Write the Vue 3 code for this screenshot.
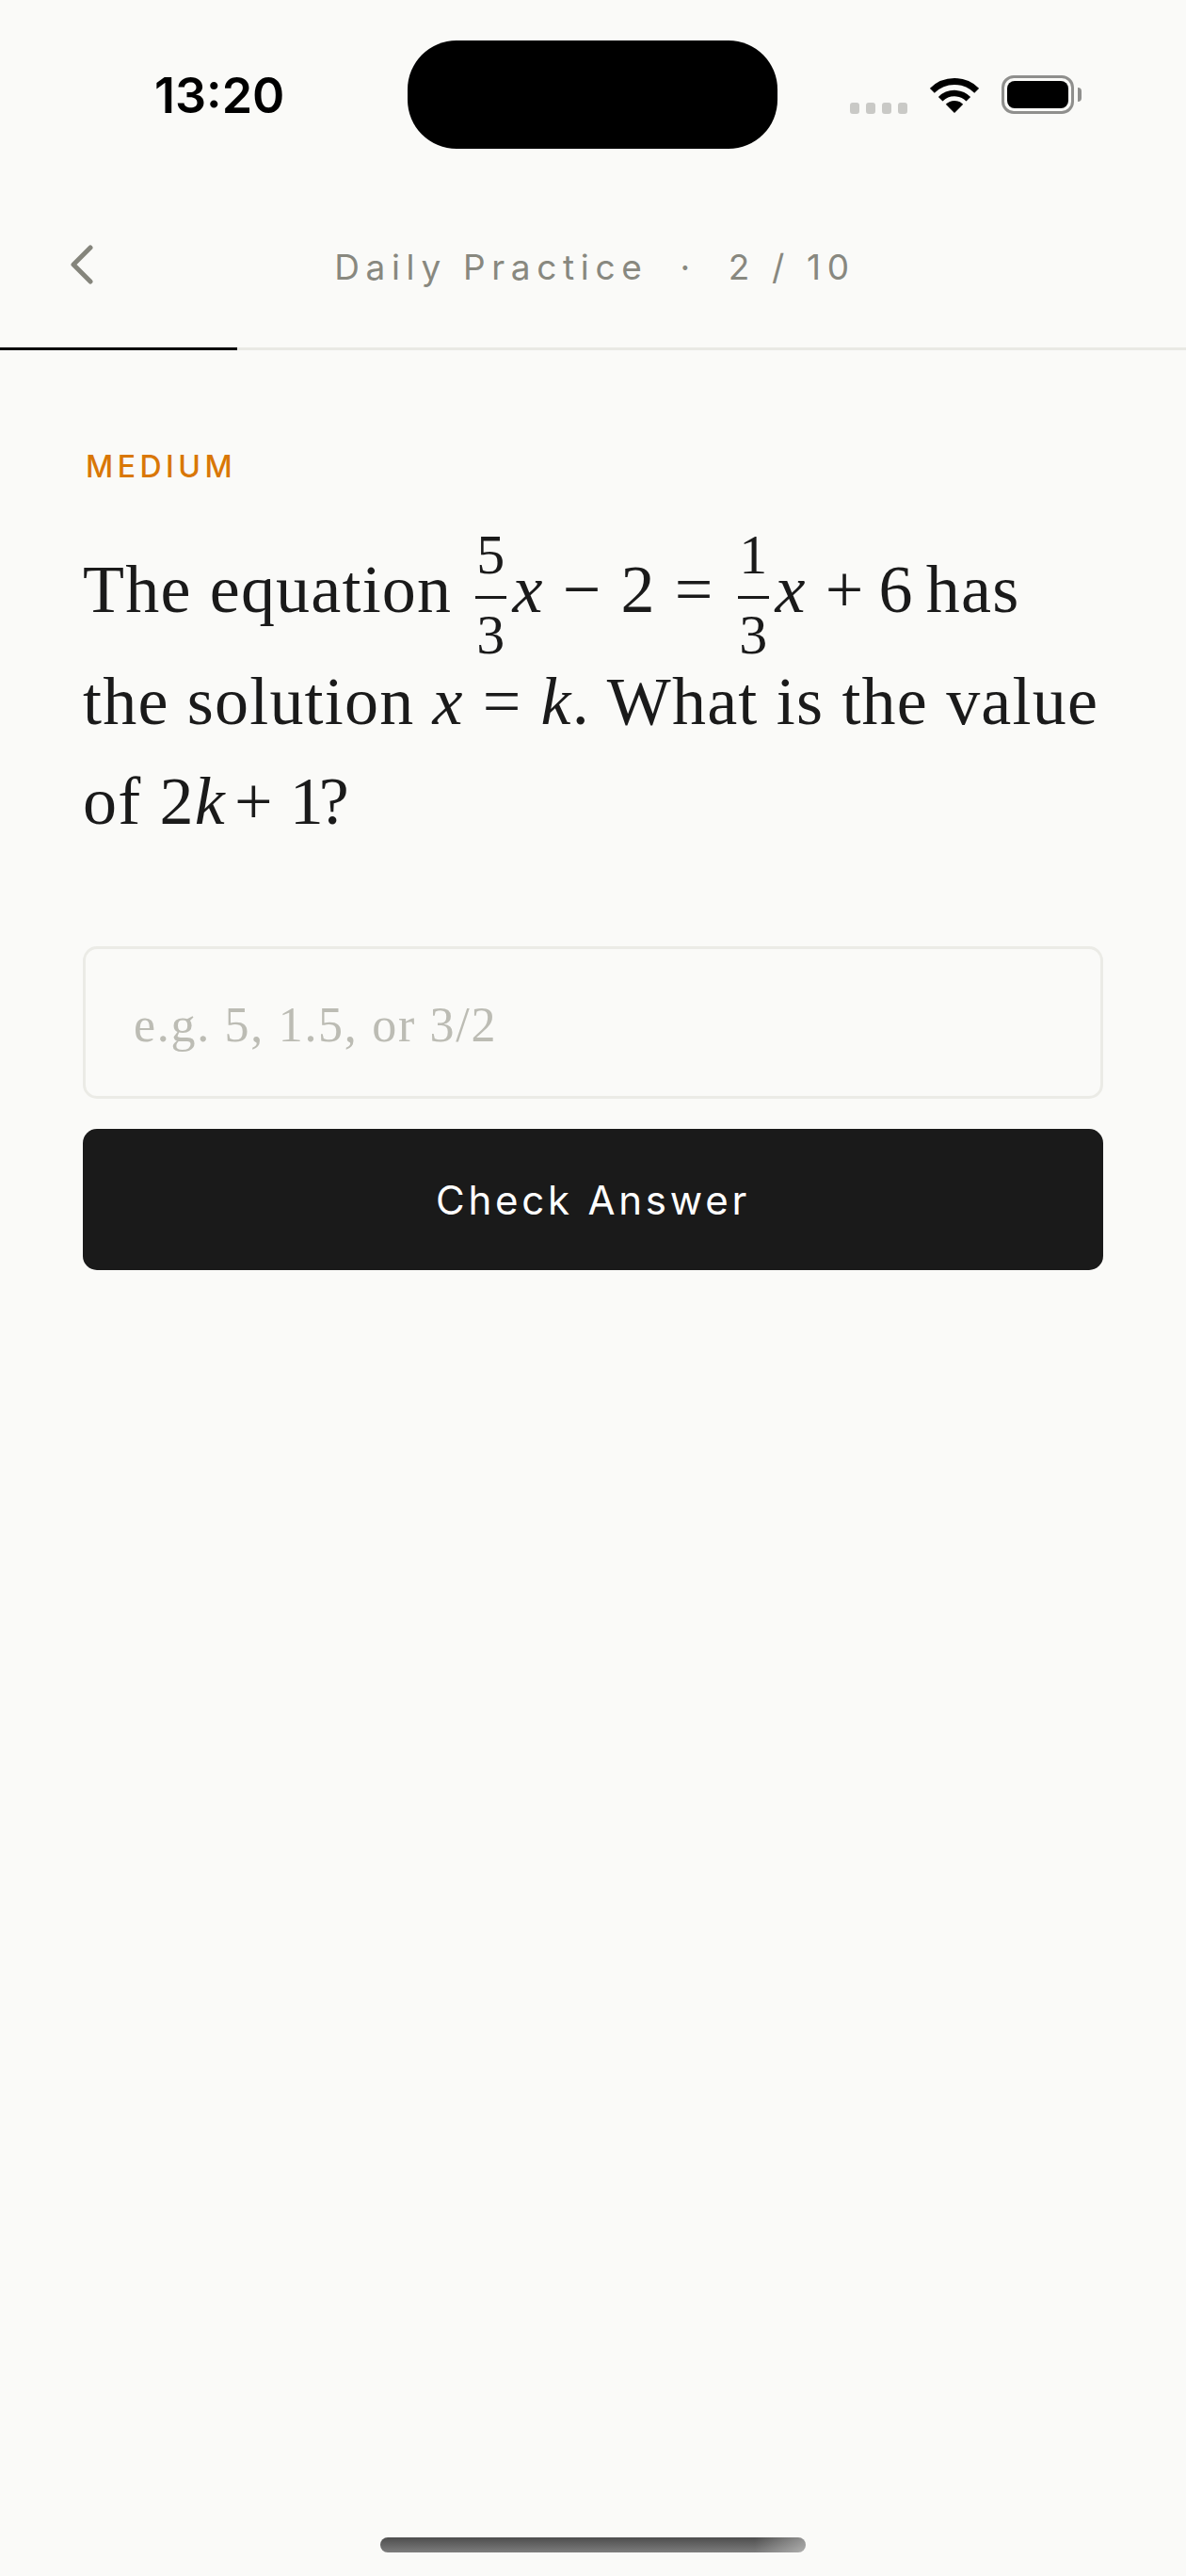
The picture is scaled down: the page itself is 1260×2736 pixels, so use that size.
<template>
  <div class="page">
    <div class="status-bar">
      <span class="time">13:20</span>
      <div class="island"></div>
      <div class="status-icons">
        <div class="signal">
          <span v-for="n in 4" :key="n" class="signal-dot"></span>
        </div>
        <svg class="wifi" width="52" height="39" viewBox="0 0 52 39">
          <path d="M2.3 15.3A33.5 33.5 0 0 1 49.7 15.3" fill="none" stroke="#000" stroke-width="7" />
          <path d="M11.2 24.2A21 21 0 0 1 40.8 24.2" fill="none" stroke="#000" stroke-width="6.5" />
          <path d="M26 39L16.8 29.8A13 13 0 0 1 35.2 29.8Z" fill="#000" />
        </svg>
        <div class="battery">
          <div class="battery-fill"></div>
        </div>
        <div class="battery-cap"></div>
      </div>
    </div>

    <header class="top-bar">
      <svg class="back" width="24" height="42" viewBox="0 0 24 42">
        <path d="M21 3L3 21L21 39" fill="none" stroke="#85857c" stroke-width="5" stroke-linecap="round" stroke-linejoin="round" />
      </svg>
      <span class="title">Daily Practice<span class="sep">·</span>2 / 10</span>
    </header>
    <div class="progress">
      <div class="progress-fill" :style="{ width: (current / total) * 100 + '%' }"></div>
    </div>

    <main class="content">
      <div class="level">MEDIUM</div>
      <p class="question">
        The equation
        <span class="frac"><span>5</span><i class="bar"></i><span>3</span></span><em>x</em><span class="op">−</span>2<span class="op">=</span><span class="frac"><span>1</span><i class="bar"></i><span>3</span></span><em>x</em><span class="op">+</span><span class="has">6 has</span><br />
        the solution <em>x</em><span class="op">=</span><em>k</em>. What is the value<br />
        of 2<em>k</em><span class="op tight">+</span><span class="one">1</span>?
      </p>
      <input class="answer" type="text" placeholder="e.g. 5, 1.5, or 3/2" />
      <button class="check" type="button">Check Answer</button>
    </main>

    <div class="home-indicator"></div>
  </div>
</template>

<script setup>
const current = 2
const total = 10
</script>

<style>
html,
body {
  margin: 0;
  background: #fafaf8;
}
</style>

<style scoped>
.page {
  display: flex;
  flex-direction: column;
  width: 1260px;
  height: 2736px;
  background: #fafaf8;
  font-family: Inter, "Liberation Sans", sans-serif;
}

/* status bar */
.status-bar {
  display: grid;
  grid-template-columns: 433px 393px 1fr;
  align-items: center;
  height: 115px;
  padding-top: 43px;
  padding-bottom: 42px;
}

.time {
  padding-left: 164px;
  padding-top: 3px;
  font-size: 52px;
  line-height: 60px;
  font-weight: 600;
  color: #000;
}

.island {
  height: 115px;
  background: #000;
  border-radius: 52px;
}

.status-icons {
  display: flex;
  align-items: center;
  padding-left: 77px;
}

.signal {
  display: flex;
  gap: 7px;
  margin-top: 29px;
  margin-right: 24px;
}

.signal-dot {
  width: 10px;
  height: 12px;
  border-radius: 3px;
  background: #c9c9c6;
}

.wifi {
  margin-right: 24px;
}

.battery {
  box-sizing: border-box;
  width: 77px;
  height: 41px;
  padding: 3px;
  border: 3px solid #8f8f8d;
  border-radius: 13px;
}

.battery-fill {
  height: 100%;
  background: #000;
  border-radius: 8px;
}

.battery-cap {
  width: 4px;
  height: 15px;
  margin-left: 4px;
  background: #8f8f8d;
  border-radius: 0 8px 8px 0;
}

/* header */
.top-bar {
  position: relative;
  display: flex;
  align-items: center;
  justify-content: center;
  height: 169px;
}

.back {
  position: absolute;
  left: 75px;
  top: 60px;
}

.title {
  margin-top: -3px;
  margin-left: 4px;
  font-size: 37px;
  letter-spacing: 0.18em;
  color: #88887f;
  white-space: pre;
}

.sep {
  margin: 0 34px;
}

.progress {
  height: 3px;
  background: #e9e9e4;
}

.progress-fill {
  height: 100%;
  background: #000;
}

/* question */
.content {
  display: flex;
  flex-direction: column;
  padding: 105px 88px 0;
}

.level {
  font-size: 32px;
  line-height: 38px;
  font-weight: 500;
  letter-spacing: 0.14em;
  color: #d97706;
  padding-left: 3px;
}

.question {
  margin: 44px 0 0;
  font-family: "Liberation Serif", serif;
  font-size: 72px;
  line-height: 106px;
  color: #1a1a1a;
  white-space: nowrap;
  letter-spacing: 1.2px;
}

.question em {
  font-style: italic;
}

.op {
  margin: 0 20px;
}

.op.tight {
  margin: 0 17px 0 9px;
}

.has {
  margin-left: -5px;
  word-spacing: -6px;
}

.one {
  letter-spacing: -5px;
}

.frac {
  display: inline-flex;
  flex-direction: column;
  align-items: center;
  vertical-align: 41px;
  margin: 0 6px -12px;
  font-size: 60px;
  line-height: 60px;
}

.bar {
  display: block;
  width: 33px;
  height: 3px;
  margin: 14px 0 8px;
  background: #1a1a1a;
}

.answer {
  box-sizing: border-box;
  width: 100%;
  height: 162px;
  margin-top: 101px;
  padding: 4px 51px 0;
  border: 3px solid #ebebe6;
  border-radius: 15px;
  background: transparent;
  font-family: "Liberation Serif", serif;
  font-size: 52px;
  letter-spacing: 1.7px;
  outline: none;
}

.answer::placeholder {
  color: #bcbcb4;
  opacity: 1;
}

.check {
  width: 100%;
  height: 150px;
  margin-top: 32px;
  border: 0;
  border-radius: 15px;
  background: #1a1a1a;
  color: #fff;
  font-family: Inter, "Liberation Sans", sans-serif;
  font-size: 42px;
  font-weight: 400;
  letter-spacing: 0.09em;
}

.home-indicator {
  width: 452px;
  height: 16px;
  margin: auto auto 25px;
  border-radius: 8px;
  background:
    linear-gradient(90deg, rgba(250, 250, 248, 0) 88%, rgba(250, 250, 248, 0.4) 100%),
    linear-gradient(180deg, #4d4d4d, #7d7d7d);
}
</style>
